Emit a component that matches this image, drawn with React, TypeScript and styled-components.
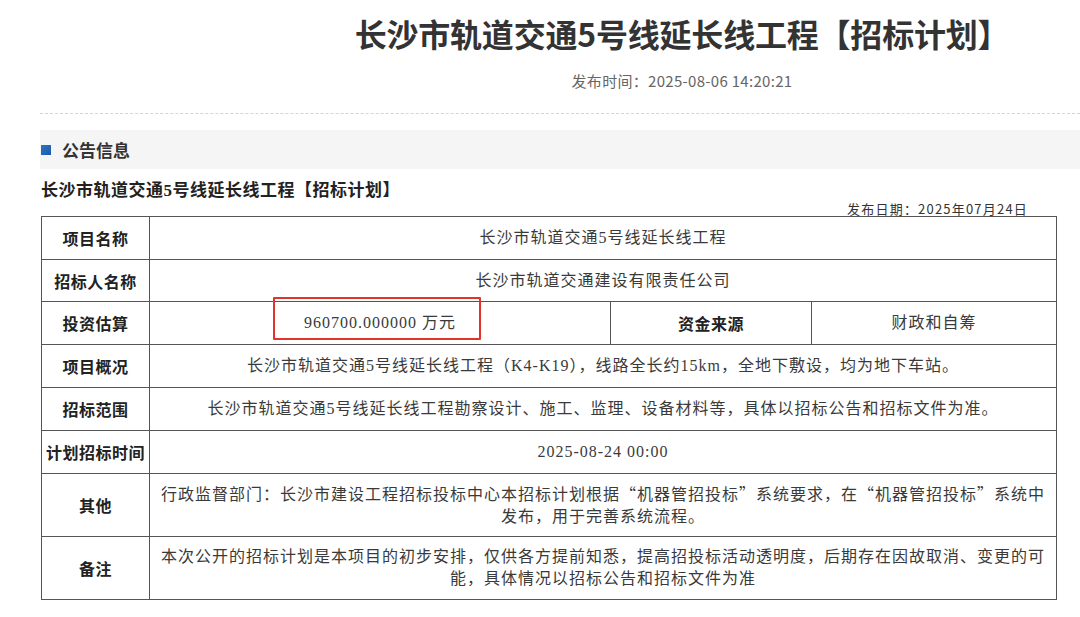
import React from "react";
import styled, { createGlobalStyle } from "styled-components";

const GlobalStyle = createGlobalStyle`
  html, body { margin: 0; padding: 0; background: #ffffff; }
  body { font-family: "Noto Sans CJK SC", "Noto Sans", sans-serif; color: #333; }
`;

const Page = styled.div`
  width: 1080px;
  height: 617px;
  overflow: hidden;
  padding-left: 40px;
  box-sizing: border-box;
`;

const Header = styled.header`
  display: flex;
  flex-direction: column;
  align-items: center;
  padding-left: 244px;
  padding-top: 13px;
  padding-bottom: 22px;
  border-bottom: 1px dashed #d4d4d4;
`;

const Title = styled.h1`
  margin: 0;
  font-family: "Noto Sans CJK SC", sans-serif;
  font-size: 32px;
  line-height: 40px;
  font-weight: 700;
  color: #333;
  white-space: nowrap;
  letter-spacing: -0.2px;
`;

const PubTime = styled.div`
  margin-top: 18px;
  font-family: "Noto Sans CJK SC", sans-serif;
  font-size: 15px;
  line-height: 20px;
  letter-spacing: 0.3px;
  color: #666;
`;

const SectionBar = styled.div`
  margin-top: 16px;
  height: 39px;
  background: #f5f5f5;
  display: flex;
  align-items: center;
  gap: 11px;
  padding-left: 1px;
`;

const SquareMark = styled.span`
  width: 10px;
  height: 10px;
  background: linear-gradient(135deg, #2a74c6, #1b5aa8);
`;

const SectionTitle = styled.span`
  font-family: "Noto Sans CJK SC", sans-serif;
  font-size: 17px;
  font-weight: 700;
  color: #333;
`;

const Content = styled.div`
  width: 1015px;
  margin-left: 1px;
  padding-top: 12px;
`;

const SubTitle = styled.div`
  font-family: "Liberation Serif", "Noto Sans CJK SC", serif;
  font-size: 17px;
  line-height: 20px;
  font-weight: 700;
  letter-spacing: 0.5px;
  color: #222;
  white-space: nowrap;
`;

const Meta = styled.div`
  text-align: right;
  padding-right: 28px;
  font-family: "Noto Sans CJK SC", sans-serif;
  font-size: 13px;
  line-height: 15px;
  letter-spacing: 1.2px;
  color: #333;
`;

const TableWrap = styled.div`
  position: relative;
`;

const Table = styled.table`
  width: 1015px;
  border-collapse: collapse;
  table-layout: fixed;
  font-family: "Liberation Serif", "Noto Sans CJK SC", serif;
  font-size: 16px;
  letter-spacing: 1px;
  color: #3a3a3a;
`;

const Row = styled.tr<{ $h: number }>`
  height: ${(p) => p.$h}px;
`;

const Label = styled.th`
  border: 1px solid #555;
  font-weight: 700;
  color: #222;
  text-align: center;
  padding: 0;
  white-space: nowrap;
  letter-spacing: 0.5px;
`;

const Cell = styled.td`
  border: 1px solid #555;
  text-align: center;
  padding: 0 7px;
  line-height: 22px;
  font-weight: 400;
`;

const Quote = styled.span`
  font-family: "Noto Sans CJK SC", sans-serif;
`;

const Highlight = styled.div`
  position: absolute;
  left: 232px;
  top: 81px;
  width: 204px;
  height: 39px;
  border: 2px solid #e0342c;
  border-radius: 1px;
  pointer-events: none;
`;

const Q: React.FC<{ children: React.ReactNode }> = ({ children }) => (
  <Quote>“{children}”</Quote>
);

export default function App() {
  return (
    <>
      <GlobalStyle />
      <Page>
        <Header>
          <Title>长沙市轨道交通5号线延长线工程【招标计划】</Title>
          <PubTime>发布时间：2025-08-06 14:20:21</PubTime>
        </Header>
        <SectionBar>
          <SquareMark />
          <SectionTitle>公告信息</SectionTitle>
        </SectionBar>
        <Content>
          <SubTitle>长沙市轨道交通5号线延长线工程【招标计划】</SubTitle>
          <Meta>发布日期：2025年07月24日</Meta>
          <TableWrap>
            <Table>
              <colgroup>
                <col style={{ width: 108 }} />
                <col style={{ width: 461 }} />
                <col style={{ width: 201 }} />
                <col style={{ width: 245 }} />
              </colgroup>
              <tbody>
                <Row $h={43}>
                  <Label>项目名称</Label>
                  <Cell colSpan={3}>长沙市轨道交通5号线延长线工程</Cell>
                </Row>
                <Row $h={42}>
                  <Label>招标人名称</Label>
                  <Cell colSpan={3}>长沙市轨道交通建设有限责任公司</Cell>
                </Row>
                <Row $h={43}>
                  <Label>投资估算</Label>
                  <Cell>960700.000000 万元</Cell>
                  <Label>资金来源</Label>
                  <Cell>财政和自筹</Cell>
                </Row>
                <Row $h={43}>
                  <Label>项目概况</Label>
                  <Cell colSpan={3}>
                    长沙市轨道交通5号线延长线工程（K4-K19），线路全长约15km，全地下敷设，均为地下车站。
                  </Cell>
                </Row>
                <Row $h={43}>
                  <Label>招标范围</Label>
                  <Cell colSpan={3}>
                    长沙市轨道交通5号线延长线工程勘察设计、施工、监理、设备材料等，具体以招标公告和招标文件为准。
                  </Cell>
                </Row>
                <Row $h={43}>
                  <Label>计划招标时间</Label>
                  <Cell colSpan={3}>2025-08-24 00:00</Cell>
                </Row>
                <Row $h={63}>
                  <Label>其他</Label>
                  <Cell colSpan={3}>
                    行政监督部门：长沙市建设工程招标投标中心本招标计划根据<Q>机器管招投标</Q>系统要求，在<Q>机器管招投标</Q>系统中发布，用于完善系统流程。
                  </Cell>
                </Row>
                <Row $h={63}>
                  <Label>备注</Label>
                  <Cell colSpan={3}>
                    本次公开的招标计划是本项目的初步安排，仅供各方提前知悉，提高招投标活动透明度，后期存在因故取消、变更的可能，具体情况以招标公告和招标文件为准
                  </Cell>
                </Row>
              </tbody>
            </Table>
            <Highlight />
          </TableWrap>
        </Content>
      </Page>
    </>
  );
}
